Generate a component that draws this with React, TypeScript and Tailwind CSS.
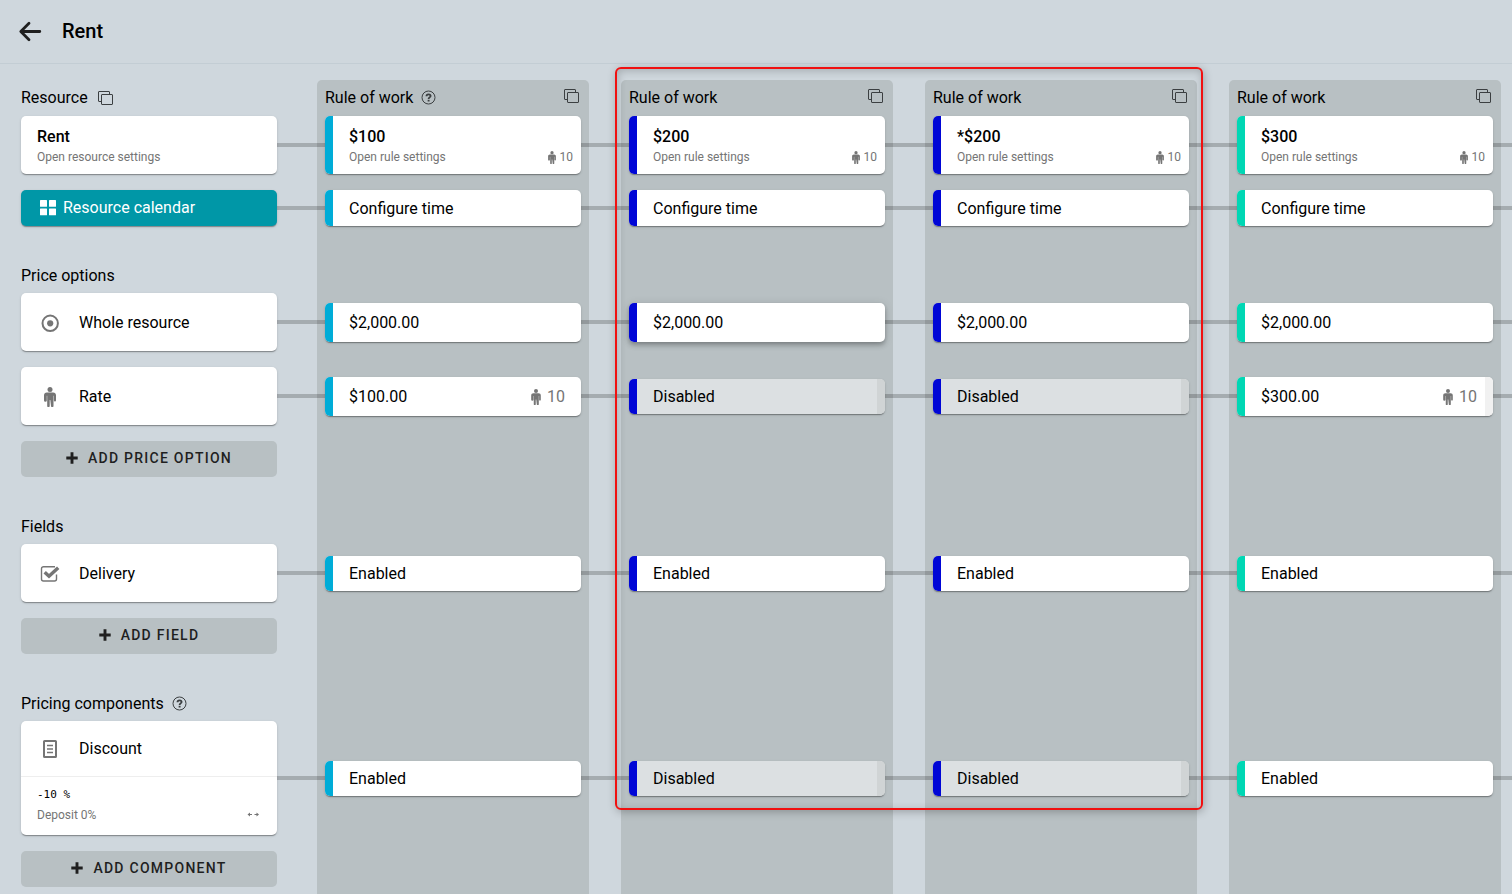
import React from "react";

type Tone = "cyan" | "blue" | "green";

const toneClass: Record<Tone, string> = {
  cyan: "bg-[#00acd7]",
  blue: "bg-[#0006d6]",
  green: "bg-[#00d7b4]",
};

const cardShadow =
  "shadow-[0_2px_1px_-1px_rgba(0,0,0,0.2),0_1px_1px_0_rgba(0,0,0,0.14),0_1px_3px_0_rgba(0,0,0,0.12)]";
const raisedShadow =
  "shadow-[0_2px_4px_-1px_rgba(0,0,0,0.2),0_4px_5px_0_rgba(0,0,0,0.14),0_1px_10px_0_rgba(0,0,0,0.12)]";

function ArrowIcon() {
  return (
    <svg className="h-6 w-6" viewBox="0 0 24 24" fill="none" stroke="#1f1f1f" strokeWidth="2.800" strokeLinecap="round" strokeLinejoin="round" aria-hidden="true">
      <path d="M21.800 12.500H3M11 4.300 2.800 12.500 11 20.700" />
    </svg>
  );
}

function CopyIcon() {
  return (
    <svg className="h-4 w-4" viewBox="0 0 16 16" fill="none" stroke="#3b3f41" strokeWidth="1" aria-hidden="true">
      <rect x="3.500" y="4.500" width="11" height="10" rx="0.500" />
      <path d="M11.500 4.500V2a.5.5 0 0 0-.5-.5H1a.5.5 0 0 0-.5.5v9a.5.5 0 0 0 .5.5h2.500" />
    </svg>
  );
}

function HelpIcon() {
  return (
    <svg className="h-4 w-4" viewBox="0 0 16 16" fill="none" stroke="#3b3f41" aria-hidden="true">
      <circle cx="7.500" cy="7.500" r="6.500" strokeWidth="1" />
      <path d="M5.500 6.200C5.500 4.800 6.300 4.300 7.500 4.300s2.100.6 2.100 1.700c0 1.400-2 1.400-2 2.900" strokeWidth="1.800" />
      <path d="M7.600 9.800v1.700" strokeWidth="1.900" />
    </svg>
  );
}

function ManIcon({ className }: { className: string }) {
  return (
    <svg className={className} viewBox="0 0 12 20" fill="currentColor" aria-hidden="true">
      <circle cx="6" cy="2.500" r="2.500" />
      <path d="M2.800 5.400h6.400c1.700 0 2.800 1.100 2.800 2.800v5.200a1.050 1.050 0 0 1-2.100 0V8.700h-.4v10.200a1.200 1.200 0 0 1-2.500.1L6.300 13h-.6v6a1.200 1.200 0 0 1-2.500-.1V8.700h-.4v4.700A1.050 1.050 0 0 1 0 13.400V8.200C0 6.500 1.100 5.400 2.800 5.400Z" />
    </svg>
  );
}

function GridIcon() {
  return (
    <svg className="h-4 w-4" viewBox="0 0 16 16" fill="#fff" aria-hidden="true">
      <rect x="0" y="0" width="7" height="6.700" rx="0.500" />
      <rect x="9" y="0" width="7" height="6.700" rx="0.500" />
      <rect x="0" y="8.500" width="7" height="6.700" rx="0.500" />
      <rect x="9" y="8.500" width="7" height="6.700" rx="0.500" />
    </svg>
  );
}

function TargetIcon() {
  return (
    <svg className="h-5 w-5" viewBox="0 0 20 20" aria-hidden="true">
      <circle cx="10.200" cy="10.300" r="7.700" fill="none" stroke="#757575" strokeWidth="2" />
      <circle cx="10.200" cy="10.300" r="3.100" fill="#757575" />
    </svg>
  );
}

function CheckIcon() {
  return (
    <svg className="h-5 w-5" viewBox="0 0 20 20" fill="none" stroke="#757575" aria-hidden="true">
      <path d="M15 2.700H3.500a2 2 0 0 0-2 2v10.300a2 2 0 0 0 2 2h11a2 2 0 0 0 2-2V10.500" strokeWidth="1.400" />
      <path d="M4.700 8.300 9 12.200l9.200-8.400" strokeWidth="3.500" />
    </svg>
  );
}

function ListIcon() {
  return (
    <svg className="h-5 w-5" viewBox="0 0 20 20" fill="none" stroke="#757575" aria-hidden="true">
      <rect x="4" y="2" width="12" height="16" rx="0.600" strokeWidth="2" />
      <path d="M7 6.500h6M7 10h6M7 13.500h6" strokeWidth="1.500" />
    </svg>
  );
}

function PlusIcon() {
  return (
    <svg className="h-3 w-3" viewBox="0 0 12 12" fill="none" stroke="#1f1f1f" strokeWidth="2.900" aria-hidden="true">
      <path d="M6 .3v11.400M.3 6h11.400" />
    </svg>
  );
}

function Row({ height, children }: { height: string; children: React.ReactNode }) {
  return (
    <div className={`flex items-center ${height}`}>
      <div className="w-64 shrink-0">{children}</div>
      <div className="relative z-10 h-1 w-12 shrink-0 bg-black/20" />
    </div>
  );
}

function SectionTitle({ children }: { children: React.ReactNode }) {
  return <h2 className="flex h-9 items-center gap-2 pt-0.5 text-base">{children}</h2>;
}

function AddButton({ label }: { label: string }) {
  return (
    <button className="mt-4 flex h-9 w-64 items-center justify-center gap-2.5 rounded-[5px] bg-[#b8c0c3] pb-0.5 text-sm font-medium tracking-[0.09em] text-[#1f1f1f] uppercase">
      <PlusIcon />
      {label}
    </button>
  );
}

function OptionCard({ icon, label }: { icon: React.ReactNode; label: string }) {
  return (
    <button className={`flex h-[58px] w-full items-center rounded-[5px] bg-white pt-0.5 pl-[19px] text-left text-base ${cardShadow}`}>
      <span className="flex w-[39px] text-[#757575]">{icon}</span>
      {label}
    </button>
  );
}

function Sidebar() {
  return (
    <aside className="w-64 shrink-0">
      <h2 className="flex h-9 items-center gap-2.5 text-base">
        Resource
        <button aria-label="Copy resource"><CopyIcon /></button>
      </h2>
      <Row height="h-[58px]">
        <button className={`flex h-[58px] w-full flex-col justify-center rounded-[5px] bg-white px-4 pt-1 text-left ${cardShadow}`}>
          <span className="text-base leading-5 font-medium">Rent</span>
          <span className="text-xs leading-5 text-[#757575]">Open resource settings</span>
        </button>
      </Row>
      <div className="mt-4">
        <Row height="h-9">
          <button className={`flex h-9 w-full items-center gap-[7px] rounded-[5px] bg-[#0097a7] pl-[19px] text-base text-white ${cardShadow}`}>
            <GridIcon />
            Resource calendar
          </button>
        </Row>
      </div>

      <section className="mt-[31px]">
        <SectionTitle>Price options</SectionTitle>
        <div className="flex flex-col gap-4">
          <Row height="h-[58px]"><OptionCard icon={<TargetIcon />} label="Whole resource" /></Row>
          <Row height="h-[58px]">
            <OptionCard icon={<ManIcon className="ml-1 h-5 w-3" />} label="Rate" />
          </Row>
        </div>
        <AddButton label="Add price option" />
      </section>

      <section className="mt-[31px]">
        <SectionTitle>Fields</SectionTitle>
        <Row height="h-[58px]"><OptionCard icon={<CheckIcon />} label="Delivery" /></Row>
        <AddButton label="Add field" />
      </section>

      <section className="mt-[31px]">
        <SectionTitle>
          Pricing components
          <button aria-label="About pricing components"><HelpIcon /></button>
        </SectionTitle>
        <Row height="h-[114px]">
          <button className={`flex h-[114px] w-full flex-col rounded-[5px] bg-white text-left ${cardShadow}`}>
            <span className="flex h-14 w-full items-center border-b border-[#eeeeee] pl-[19px] text-base">
              <span className="w-[39px]"><ListIcon /></span>
              Discount
            </span>
            <span className="flex w-full flex-1 flex-col px-4 pt-2">
              <span className="font-['DejaVu_Sans_Mono',monospace] text-[11px] leading-5">-10 %</span>
              <span className="flex items-center justify-between text-xs leading-5 text-[#757575]">
                Deposit 0%
                <svg className="mr-0.5 h-2 w-3" viewBox="0 0 12 8" fill="#757575" stroke="#757575" aria-hidden="true">
                  <path d="M1 3.500h4M7.500 3.500h3.500" strokeWidth="1" />
                  <path d="M3 1.500v4L.5 3.500ZM9.500 1.500v4L12 3.500Z" stroke="none" />
                </svg>
              </span>
            </span>
          </button>
        </Row>
        <AddButton label="Add component" />
      </section>
    </aside>
  );
}

type CellProps = {
  tone: Tone;
  height: string;
  label: string;
  disabled?: boolean;
  raised?: boolean;
  people?: number;
  edge?: boolean;
};

function Cell({ tone, height, label, disabled, raised, people, edge }: CellProps) {
  return (
    <button
      className={`flex w-full items-stretch overflow-hidden rounded-[5px] text-left text-base ${height} ${disabled ? "bg-[#dce0e2]" : "bg-white"} ${raised ? raisedShadow : cardShadow}`}
    >
      <span className={`w-2 shrink-0 ${toneClass[tone]}`} />
      <span className="flex flex-1 items-center px-4 pt-px">{label}</span>
      {people !== undefined && (
        <span className={`flex items-center gap-1.5 pt-px text-[#757575] ${edge ? "pr-2" : "pr-4"}`}>
          <ManIcon className="h-4 w-2.5" />
          {people}
        </span>
      )}
      {(disabled || edge) && <span className={`w-2 shrink-0 ${disabled ? "bg-[#d0d4d5]" : "bg-[#f1f1f1]"}`} />}
    </button>
  );
}

type Rule = {
  tone: Tone;
  name: string;
  help?: boolean;
  raised?: boolean;
  rate?: string;
  edge?: boolean;
  discount: boolean;
};

function RuleColumn({ rule }: { rule: Rule }) {
  const { tone } = rule;
  return (
    <section className="w-[272px] shrink-0 rounded-t-[5px] bg-[#b8c0c3] px-2">
      <h2 className="flex h-9 items-center gap-2 text-base">
        Rule of work
        {rule.help && <button aria-label="About rules of work"><HelpIcon /></button>}
        <button className="mr-px mb-1 ml-auto" aria-label="Copy rule"><CopyIcon /></button>
      </h2>
      <Row height="h-[58px]">
        <button className={`flex h-[58px] w-full overflow-hidden rounded-[5px] bg-white text-left ${cardShadow}`}>
          <span className={`w-2 shrink-0 self-stretch ${toneClass[tone]}`} />
          <span className="flex h-full flex-1 flex-col justify-center pt-1 pr-2 pl-4">
            <span className="text-base leading-5 font-medium">{rule.name}</span>
            <span className="flex items-center justify-between text-xs leading-5 text-[#757575]">
              Open rule settings
              <span className="flex items-center gap-1">
                <ManIcon className="h-[13px] w-2" />
                10
              </span>
            </span>
          </span>
        </button>
      </Row>
      <div className="mt-4">
        <Row height="h-9"><Cell tone={tone} height="h-9" label="Configure time" /></Row>
      </div>
      <div className="mt-[67px] flex flex-col gap-4">
        <Row height="h-[58px]">
          <Cell tone={tone} height="h-[39px]" label="$2,000.00" raised={rule.raised} />
        </Row>
        <Row height="h-[58px]">
          {rule.rate ? (
            <Cell tone={tone} height="h-[39px]" label={rule.rate} people={10} edge={rule.edge} />
          ) : (
            <Cell tone={tone} height="h-[35px]" label="Disabled" disabled />
          )}
        </Row>
      </div>
      <div className="mt-[119px]">
        <Row height="h-[58px]"><Cell tone={tone} height="h-[35px]" label="Enabled" /></Row>
      </div>
      <div className="mt-[119px]">
        <Row height="h-[114px]">
          <Cell tone={tone} height="h-[35px]" label={rule.discount ? "Enabled" : "Disabled"} disabled={!rule.discount} />
        </Row>
      </div>
    </section>
  );
}

const firstRule: Rule = { tone: "cyan", name: "$100", help: true, rate: "$100.00", discount: true };
const markedRules: Rule[] = [
  { tone: "blue", name: "$200", raised: true, discount: false },
  { tone: "blue", name: "*$200", discount: false },
];
const lastRule: Rule = { tone: "green", name: "$300", rate: "$300.00", edge: true, discount: true };

export default function App() {
  return (
    <div className="flex min-h-screen flex-col overflow-hidden bg-[#cfd7dd] font-[Roboto,sans-serif] text-black">
      <header className="flex h-16 items-center gap-5 border-b border-[#c3cdd4] pb-0.5 pl-[18px]">
        <button aria-label="Back"><ArrowIcon /></button>
        <h1 className="text-xl font-medium">Rent</h1>
      </header>
      <main className="flex flex-1 pt-4 pl-[21px]">
        <Sidebar />
        <div className="ml-10 flex gap-8">
          <RuleColumn rule={firstRule} />
          <div className="relative flex gap-8">
            {markedRules.map((rule) => (
              <RuleColumn key={rule.name} rule={rule} />
            ))}
            <div className="pointer-events-none absolute -inset-x-1.5 -top-[13px] z-20 h-[743px] rounded-md border-2 border-[#f01010] shadow-[1px_2px_8px_rgba(0,0,0,0.25),inset_1px_2px_8px_rgba(0,0,0,0.2)]" />
          </div>
          <RuleColumn rule={lastRule} />
        </div>
      </main>
    </div>
  );
}
